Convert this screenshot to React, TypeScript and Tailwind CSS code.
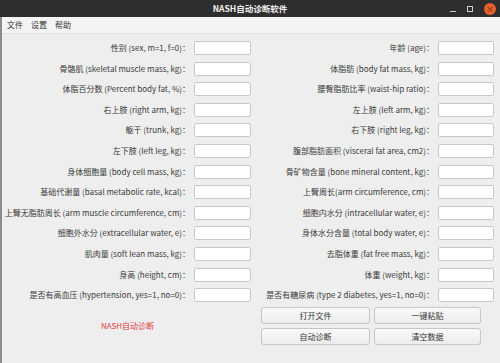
import React from "react";

const rows: [string, string][] = [
  ["性别 (sex, m=1, f=0)：", "年龄 (age)："],
  ["骨骼肌 (skeletal muscle mass, kg)：", "体脂肪 (body fat mass, kg)："],
  ["体脂百分数 (Percent body fat, %)：", "腰臀脂肪比率 (waist-hip ratio)："],
  ["右上肢 (right arm, kg)：", "左上肢 (left arm, kg)："],
  ["躯干 (trunk, kg)：", "右下肢 (right leg, kg)："],
  ["左下肢 (left leg, kg)：", "腹部脂肪面积  (visceral fat area, cm2)："],
  ["身体细胞量 (body cell mass, kg)：", "骨矿物含量 (bone mineral content, kg)："],
  ["基础代谢量 (basal metabolic rate, kcal)：", "上臂周长(arm circumference, cm)："],
  ["上臂无脂肪周长 (arm muscle circumference, cm)：", "细胞内水分 (intracellular water, e)："],
  ["细胞外水分 (extracellular water, e)：", "身体水分含量 (total body water, e)："],
  ["肌肉量 (soft lean mass, kg)：", "去脂体重 (fat free mass, kg)："],
  ["身高 (height, cm)：", "体重 (weight, kg)："],
  ["是否有高血压 (hypertension, yes=1, no=0)：", "是否有糖尿病 (type 2 diabetes, yes=1, no=0)："],
];

function Label({ text }: { text: string }) {
  return (
    <div className="flex h-[14px] items-center justify-end whitespace-nowrap text-[8px] leading-none text-[#3a3a3a]">
      {text}
    </div>
  );
}

function Field() {
  return <input className="h-[14px] w-full rounded-[2px] border border-[#c9c9c9] bg-white outline-none" />;
}

function Btn({ children }: { children: React.ReactNode }) {
  return (
    <button
      type="button"
      className="h-[17px] rounded-[3px] border border-[#c6c6c6] bg-gradient-to-b from-[#fafafa] to-[#ececec] text-[8px] leading-none text-[#333]"
    >
      {children}
    </button>
  );
}

export default function App() {
  return (
    <div
      className="flex h-[363px] w-[500px] flex-col overflow-hidden bg-[#eeeeee]"
      style={{ fontFamily: '"Noto Sans CJK SC", "Noto Sans", sans-serif' }}
    >
      <div className="relative flex h-[17px] items-center justify-center bg-[#2e2e2e]">
        <span className="text-[8.5px] font-bold text-[#f0f0f0]">NASH自动诊断软件</span>
        <div className="absolute right-[4px] top-0 flex h-[17px] items-center gap-[11px]">
          <span className="mt-[5px] block h-[1px] w-[6px] bg-[#cfcfcf]" />
          <span className="block h-[6px] w-[6px] border border-[#cfcfcf]" />
          <span className="flex h-[12px] w-[12px] items-center justify-center rounded-full bg-[#e8602c] text-[8px] leading-none text-[#5a2a10]">
            ×
          </span>
        </div>
      </div>

      <div className="flex flex-1 flex-col border-l-2 border-[#8c8c8c]">
        <div className="flex h-[17px] items-center gap-[8px] border-b border-[#e2e2e2] bg-[#f4f4f4] pl-[5px] text-[8px] leading-none text-[#333]">
          <span>文件</span>
          <span>设置</span>
          <span>帮助</span>
        </div>

        <div className="grid grid-cols-[186px_57px_179px_56px] gap-x-[4px] gap-y-[6.6px] pl-[2px] pt-[7px]">
          {rows.map(([l, r]) => (
            <React.Fragment key={l}>
              <Label text={l} />
              <Field />
              <Label text={r} />
              <Field />
            </React.Fragment>
          ))}
        </div>

        <div className="mt-[5px] flex">
          <div className="flex w-[259px] items-center justify-center pr-[8px] text-[8px] text-[#e0403f]">
            NASH自动诊断
          </div>
          <div className="grid w-[220px] grid-cols-[109px_107px] gap-x-[4px] gap-y-[4px]">
            <Btn>打开文件</Btn>
            <Btn>一键粘贴</Btn>
            <Btn>自动诊断</Btn>
            <Btn>清空数据</Btn>
          </div>
        </div>
      </div>
    </div>
  );
}
